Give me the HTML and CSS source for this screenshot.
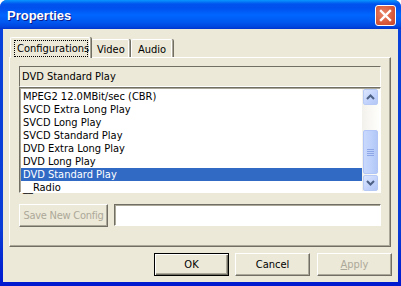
FILE: index.html
```html
<!DOCTYPE html>
<html>
<head>
<meta charset="utf-8">
<link rel="stylesheet" href="styles.css">
</head>
<body>
<div class="window">
  <div class="titlebar">
    <span class="title">Properties</span>
    <div class="close">
      <svg width="13" height="13" viewBox="0 0 13 13"><path d="M2 2 L11 11 M11 2 L2 11" stroke="#fff" stroke-width="2.4" stroke-linecap="square"/></svg>
    </div>
  </div>
  <div class="client">
    <div class="tabs">
      <div class="tab active"><span class="focus">Configurations</span></div>
      <div class="tab">Video</div>
      <div class="tab">Audio</div>
    </div>
    <div class="panel">
      <div class="header">DVD Standard Play</div>
      <div class="listbox">
        <div class="items">
          <div class="item">MPEG2 12.0MBit/sec (CBR)</div>
          <div class="item">SVCD Extra Long Play</div>
          <div class="item">SVCD Long Play</div>
          <div class="item">SVCD Standard Play</div>
          <div class="item">DVD Extra Long Play</div>
          <div class="item">DVD Long Play</div>
          <div class="item selected">DVD Standard Play</div>
          <div class="item">__Radio</div>
        </div>
        <div class="scrollbar">
          <div class="sbtn"><svg width="9" height="6" viewBox="0 0 9 6"><path d="M1 5 L4.5 1.5 L8 5" fill="none" stroke="#4D6185" stroke-width="2"/></svg></div>
          <div class="track-top"></div>
          <div class="thumb"><svg width="7" height="8" viewBox="0 0 7 8"><path d="M0 1.5H7M0 3.5H7M0 5.5H7M0 7.5H7" stroke="#8CA6E6" stroke-width="1"/></svg></div>
          <div class="sbtn"><svg width="9" height="6" viewBox="0 0 9 6"><path d="M1 1 L4.5 4.5 L8 1" fill="none" stroke="#4D6185" stroke-width="2"/></svg></div>
        </div>
      </div>
      <div class="saverow">
        <div class="btn disabled save">Save New Config</div>
        <div class="input"></div>
      </div>
    </div>
    <div class="buttons">
      <div class="btn default">OK</div>
      <div class="btn">Cancel</div>
      <div class="btn disabled"><u>A</u>pply</div>
    </div>
  </div>
</div>
</body>
</html>
```
FILE: styles.css
```css
* { box-sizing: border-box; }
html, body { margin: 0; padding: 0; }
body {
  width: 401px;
  height: 286px;
  overflow: hidden;
  font-family: "DejaVu Sans Condensed", "DejaVu Sans", sans-serif;
  font-size: 11px;
  color: #000;
}
.window {
  width: 401px;
  height: 286px;
  display: flex;
  flex-direction: column;
  background: linear-gradient(to bottom, #0842DC, #0A3CD6 80%, #0019CF);
  border-radius: 7px 7px 0 0;
  padding: 0 3px 4px 3px;
}
.titlebar {
  height: 29px;
  margin: 0 -3px;
  padding: 0 5px 0 7px;
  display: flex;
  align-items: center;
  justify-content: space-between;
  border-radius: 7px 7px 0 0;
  background: linear-gradient(to bottom, #0997FF 0px, #0053EE 4px, #0050EE 8px, #0066FF 15px, #0058F0 22px, #0045DE 27px, #0033CC 29px);
}
.title {
  color: #fff;
  font-family: "Liberation Sans", Arial, sans-serif;
  font-weight: bold;
  font-size: 13px;
  text-shadow: 1px 1px 0 #0A1A8C;
  margin-top: 1px;
}
.close {
  width: 21px;
  height: 21px;
  margin-top: 2px;
  border: 1px solid #fff;
  border-radius: 3px;
  background: radial-gradient(circle at 40% 40%, #E9866A 0%, #D8593A 60%, #C4432A 100%);
  display: flex;
  align-items: center;
  justify-content: center;
}
.client {
  flex: 1;
  background: #ECE9D8;
  display: flex;
  flex-direction: column;
  padding: 8px 0 0 6px;
}
.tabs {
  display: flex;
  align-items: flex-end;
  height: 20px;
  padding-left: 1px;
}
.tab {
  height: 18px;
  padding: 2px 6px 0 6px;
  border-top: 1px solid #fff;
  border-left: 1px solid #fff;
  border-right: 1px solid #ACA899;
  box-shadow: inset -1px 0 0 #fff, 1px 0 0 #716F64;
  border-radius: 2px 2px 0 0;
  background: #ECE9D8;
  margin-left: 2px;
  white-space: nowrap;
}
.tab:first-child { margin-left: 0; }
.tab.active {
  height: 21px;
  width: 81px;
  padding: 2px 2px 0 3px;
  margin-bottom: -1px;
  position: relative;
  z-index: 1;
  margin-right: -2px;
}
.focus {
  display: block;
  border: 1px dotted #000;
  padding: 1px 2px 1px 2px;
  line-height: 13px;
}
.tab:not(.active) { line-height: 14px; padding-top: 3px; }
.tab:nth-child(2) { width: 39px; margin-left: 2px; padding-left: 5px; }
.tab:nth-child(3) { width: 42px; margin-left: 1px; padding-left: 6px; }
.panel {
  width: 382px;
  height: 190px;
  border-top: 1px solid #fff;
  border-left: 1px solid #fff;
  border-right: 1px solid #716F64;
  border-bottom: 1px solid #716F64;
  box-shadow: inset -1px -1px 0 #ACA899;
  padding: 8px 9px 0 9px;
  display: flex;
  flex-direction: column;
}
.header {
  height: 21px;
  border-top: 1px solid #716F64;
  border-left: 1px solid #716F64;
  border-right: 1px solid #fff;
  border-bottom: 1px solid #fff;
  padding: 3px 0 0 2px;
  line-height: 13px;
}
.listbox {
  height: 106px;
  display: flex;
  border-top: 1px solid #716F64;
  border-left: 1px solid #716F64;
  border-right: 1px solid #fff;
  border-bottom: 1px solid #fff;
  box-shadow: inset 1px 1px 0 #ACA899;
  background: #fff;
  padding: 1px 1px 1px 1px;
}
.items {
  flex: 1;
  padding-top: 1px;
}
.item {
  height: 13px;
  line-height: 13px;
  padding-left: 2px;
  white-space: nowrap;
}
.item.selected {
  background: #316AC5;
  color: #fff;
}
.scrollbar {
  width: 17px;
  display: flex;
  flex-direction: column;
  background: linear-gradient(to right, #F3F1EC, #FEFEFB);
}
.sbtn {
  height: 16px;
  margin: 0 1px 0 1px;
  border: 1px solid #B7CAF5;
  border-radius: 2px;
  background: linear-gradient(135deg, #DCE6FE, #C0D1FB 60%, #B4C8F6);
  display: flex;
  align-items: center;
  justify-content: center;
}
.track-top { height: 25px; }
.thumb {
  flex: 1;
  margin: 0 1px 1px 1px;
  border: 1px solid #B1C6F6;
  border-radius: 2px;
  background: linear-gradient(to right, #C9D8FC, #BCD0FB 60%, #B2C7F6);
  display: flex;
  align-items: center;
  justify-content: center;
}
.saverow {
  display: flex;
  margin-top: 11px;
  gap: 6px;
}
.btn {
  width: 75px;
  height: 23px;
  display: flex;
  align-items: center;
  justify-content: center;
  border-top: 1px solid #fff;
  border-left: 1px solid #fff;
  border-right: 1px solid #716F64;
  border-bottom: 1px solid #716F64;
  box-shadow: inset -1px -1px 0 #ACA899;
  background: #ECE9D8;
  white-space: nowrap;
}
.btn.save { width: 89px; padding-bottom: 1px; letter-spacing: -0.25px; }
.btn.disabled { color: #ACA899; }
.btn.default {
  border: 1px solid #000;
  box-shadow: inset 1px 1px 0 #fff, inset -1px -1px 0 #716F64, inset -2px -2px 0 #ACA899;
}
.input {
  flex: 1;
  height: 22px;
  border-top: 1px solid #716F64;
  border-left: 1px solid #716F64;
  border-right: 1px solid #fff;
  border-bottom: 1px solid #fff;
  box-shadow: inset 1px 1px 0 #ACA899;
  background: #fff;
}
.buttons {
  display: flex;
  justify-content: flex-end;
  gap: 6px;
  padding-right: 6px;
  margin-top: 6px;
}
.buttons .btn:nth-child(3) { margin-left: 1px; }
```
